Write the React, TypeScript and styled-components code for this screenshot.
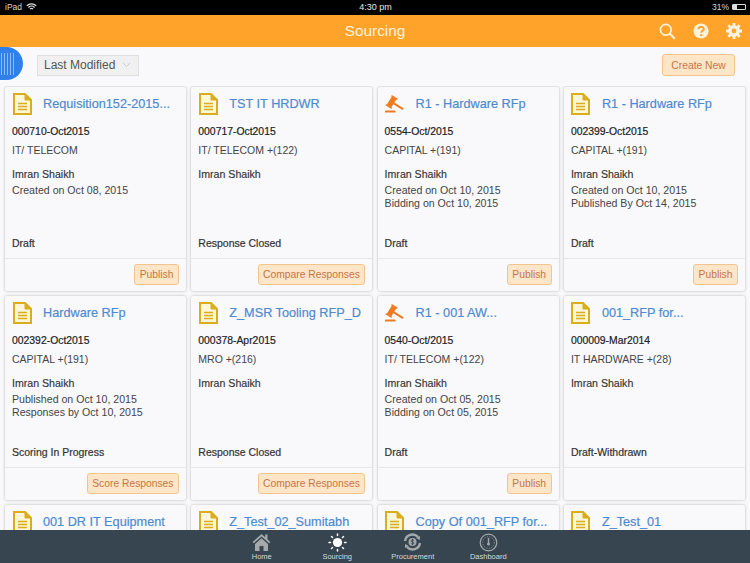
import React from "react";
import styled, { createGlobalStyle } from "styled-components";

const Global = createGlobalStyle`
  html, body { margin: 0; padding: 0; background: #f9f9fb; }
  body { font-family: "Liberation Sans", Arial, sans-serif; }
  * { box-sizing: border-box; }
`;
const Page = styled.div`
  width: 750px; height: 563px; display: flex; flex-direction: column; overflow: hidden; background: #f9f9fb;
`;
const StatusBar = styled.div`
  height: 15px; flex: none; background: #000; color: #d8d8d8; font-size: 8.5px;
  display: grid; grid-template-columns: 1fr auto 1fr; align-items: center; padding: 0 4px 1px 5px;
`;
const StatusLeft = styled.div`display: flex; align-items: center; gap: 4px;`;
const StatusRight = styled.div`display: flex; align-items: center; justify-content: flex-end; gap: 3px;`;
const Time = styled.div`font-size: 9px; color: #e8e8e8;`;
const Battery = styled.div`
  width: 14px; height: 6px; border: 1px solid #ddd; border-radius: 1px; background: linear-gradient(90deg, #ddd 35%, transparent 35%);
`;
const Header = styled.header`
  height: 32px; flex: none; background: #ffa32a; position: relative; display: flex; align-items: center; justify-content: center;
`;
const HeaderTitle = styled.h1`margin: 0; font-size: 15.4px; font-weight: 400; color: #fff2dd;`;
const HeaderIcons = styled.div`
  position: absolute; right: 8px; top: 0; bottom: 0; display: flex; align-items: center; gap: 17px;
`;
const Toolbar = styled.div`
  height: 39px; flex: none; display: flex; align-items: center; justify-content: space-between; padding: 0 15px 0 0;
`;
const ToolbarLeft = styled.div`display: flex; align-items: center; gap: 14px;`;
const SideTab = styled.div`
  width: 23px; height: 33px; margin-top: -6px; border-radius: 0 17px 17px 0; background: #2f80ea;
  display: flex; align-items: center; justify-content: flex-start; gap: 2px; padding-left: 1px;
`;
const Stripe = styled.span`display: block; width: 1px; height: 22px; background: #8fbdf5;`;
const Sort = styled.div`
  width: 102px; height: 21px; margin-top: -3px; background: #f0f0f0; border: 1px solid #dfdfdf; color: #555; font-size: 12px;
  display: flex; align-items: center; justify-content: space-between; padding: 0 7px 0 6px;
`;
const ActionButton = styled.button`
  font: inherit; font-size: 10.3px; height: 21px; padding: 0 4.5px; white-space: nowrap; color: #c67644; background: #fde5c8;
  border: 1px solid #f3c48e; border-radius: 3px; display: flex; align-items: center;
`;
const CreateButton = styled(ActionButton)`width: 73px; height: 22px; justify-content: center; margin-top: -3px;`;
const Grid = styled.main`
  flex: 1; min-height: 0; overflow: hidden; padding: 1px 5px 0; display: grid;
  grid-template-columns: repeat(4, 181px); grid-auto-rows: 203.5px; column-gap: 5.3px; row-gap: 5.6px;
`;
const Card = styled.article`
  background: #f9f9fc; border-radius: 2px; box-shadow: 0 0 3px rgba(0,0,0,.28);
  display: flex; flex-direction: column; height: 203.5px; padding: 0;
`;
const CardBody = styled.div`flex: 1; padding: 0 7px; display: flex; flex-direction: column; min-height: 0;`;
const TitleRow = styled.div`height: 33px; display: flex; align-items: center; gap: 11px;`;
const IconBox = styled.div`width: 20px; flex: none; display: flex; justify-content: center;`;
const Title = styled.h2`
  margin: 0; font-size: 12.7px; font-weight: 400; color: #4f8ad0; white-space: nowrap; -webkit-text-stroke: .2px #4f8ad0;
`;
const Code = styled.div`margin-top: 5px; font-size: 10.4px; line-height: 13px; font-weight: 400; color: #222; -webkit-text-stroke: .2px #222;`;
const Category = styled.div`margin-top: 6px; font-size: 10.5px; line-height: 13px; color: #444;`;
const Person = styled.div`margin-top: 11px; margin-bottom: 3px; font-size: 10.6px; line-height: 13px; color: #333; -webkit-text-stroke: .15px #333;`;
const Detail = styled.div`font-size: 10.6px; line-height: 12.5px; color: #444;`;
const Status = styled.div`margin-top: auto; margin-bottom: 8px; font-size: 10.5px; line-height: 13px; color: #333; -webkit-text-stroke: .2px #333;`;
const CardFooter = styled.div`
  height: 33px; flex: none; border-top: 1px solid #e6e6e6; padding: 0 7px 0 7px; display: flex; align-items: center; justify-content: flex-end;
`;
const TabBar = styled.nav`
  height: 33px; flex: none; background: #36454f; position: relative; z-index: 1;
  display: flex; justify-content: flex-start; padding-left: 224px;
`;
const Tab = styled.div`
  width: 75.5px; display: flex; flex-direction: column; align-items: center; justify-content: flex-start; padding-top: 2px; color: #d5dadc; font-size: 7.5px; line-height: 9px;
`;
const TabIcon = styled.div`height: 20px; display: flex; align-items: center; justify-content: center;`;

const DocIcon = () => (
  <svg width="19" height="22" viewBox="0 0 19 22">
    <path d="M1 1h11l6 6v14H1z" fill="#fdf6d8" stroke="#d9ad1c" strokeWidth="2" />
    <path d="M12 1v6h6" fill="#d9ad1c" stroke="#d9ad1c" strokeWidth="1" />
    <path d="M5 10.5h9M5 13.5h9M5 16.5h9" stroke="#d9ad1c" strokeWidth="1.6" />
  </svg>
);
const GavelIcon = () => (
  <svg width="23" height="20" viewBox="0 0 23 20">
    <g fill="#f07a1d" transform="rotate(32 8 8)">
      <rect x="10" y="6.800" width="13" height="2.400" />
      <rect x="4.500" y="2.500" width="6" height="11" />
      <rect x="3.500" y="1" width="8" height="1.800" rx=".4" />
      <rect x="3.500" y="13.200" width="8" height="1.800" rx=".4" />
    </g>
    <path d="M1.200 17.600h9.600a1.500 1.500 0 0 1 1.200 2.100H0a1.500 1.500 0 0 1 1.200-2.100z" fill="#f07a1d" />
  </svg>
);
const Wifi = () => (
  <svg width="11" height="8" viewBox="0 0 11 8" fill="none" stroke="#ddd" strokeWidth="1.2">
    <path d="M.8 2.800a6.800 6.800 0 0 1 9.400 0M2.400 4.500a4.400 4.400 0 0 1 6.200 0M4 6a2.200 2.200 0 0 1 3 0" />
  </svg>
);
const Search = () => (
  <svg width="17" height="17" viewBox="0 0 17 17" fill="none" stroke="#fff3df" strokeWidth="1.700">
    <circle cx="6.800" cy="6.800" r="5.400" /><path d="M10.800 10.800l5 5" strokeWidth="2.200" />
  </svg>
);
const Help = () => (
  <svg width="16" height="16" viewBox="0 0 16 16">
    <circle cx="8" cy="8" r="7.600" fill="#fff3df" />
    <path d="M5.400 6.200c0-3.200 5.400-3.200 5.400-.2 0 2-2.600 1.800-2.600 3.800" fill="none" stroke="#ffa32a" strokeWidth="1.900" />
    <circle cx="8.200" cy="12.100" r="1.200" fill="#ffa32a" />
  </svg>
);
const Gear = () => (
  <svg width="16" height="16" viewBox="0 0 16 16">
    <g fill="#fff3df">
      <path d="M6.600 0h2.800v16H6.600zM0 6.600h16v2.800H0z" />
      <path d="M6.600 0h2.800v16H6.600z" transform="rotate(45 8 8)" />
      <path d="M6.600 0h2.800v16H6.600z" transform="rotate(-45 8 8)" />
      <circle cx="8" cy="8" r="5.800" />
    </g>
    <circle cx="8" cy="8" r="2.400" fill="#ffa32a" />
  </svg>
);
const Chevron = () => (
  <svg width="9" height="6" viewBox="0 0 9 6" fill="none" stroke="#c9c9c9" strokeWidth="1">
    <path d="M1 1l3.500 3.500L8 1" />
  </svg>
);
const HomeIcon = () => (
  <svg width="19" height="18" viewBox="0 0 19 18">
    <path d="M9.500 1L.6 9l1.200 1.300L9.500 3.500l7.700 6.800L18.400 9l-2.900-2.600V1.500h-2.300v2.800z" fill="#a5a9ab" />
    <path d="M3 11l6.500-5.800L16 11v7h-4.500v-5h-4v5H3z" fill="#a5a9ab" />
  </svg>
);
const SunIcon = () => (
  <svg width="19" height="19" viewBox="0 0 19 19">
    <circle cx="9.500" cy="9.500" r="4.600" fill="#fff" />
    <g stroke="#fff" strokeWidth="1.500" strokeLinecap="round">
      <path d="M9.500 1v1.500M9.500 16.500V18M1 9.500h1.500M16.500 9.500H18M3.500 3.500l1 1M14.500 14.500l1 1M15.500 3.500l-1 1M4.500 14.500l-1 1" />
    </g>
  </svg>
);
const ProcIcon = () => (
  <svg width="19" height="18" viewBox="0 0 19 18" fill="none" stroke="#a5a9ab">
    <path d="M2 8a7.500 7.500 0 0 1 13-4" strokeWidth="2.400" />
    <path d="M17 10a7.500 7.500 0 0 1-13 4" strokeWidth="2.400" />
    <path d="M13 5l4-2v4zM6 13l-4 2v-4z" fill="#a5a9ab" stroke="none" />
    <circle cx="9.500" cy="9" r="4" fill="#a5a9ab" stroke="none" />
    <path d="M11 7.500c-1-1-3-.8-3 .4 0 1.400 3 .7 3 2.200 0 1.200-2 1.300-3 .4M9.500 5.800v6.400" stroke="#36454f" strokeWidth=".8" />
  </svg>
);
const DashIcon = () => (
  <svg width="19" height="19" viewBox="0 0 19 19" fill="none" stroke="#a5a9ab">
    <circle cx="9.500" cy="9.500" r="8.300" strokeWidth="1.200" />
    <circle cx="9.500" cy="9.500" r="5.800" strokeWidth=".8" strokeDasharray="1 1.500" />
    <path d="M9.500 10V5" strokeWidth="1.400" />
    <circle cx="9.500" cy="11" r="1.500" fill="#a5a9ab" stroke="none" />
  </svg>
);

type CardData = {
  icon: "doc" | "gavel"; title: string; code?: string; category?: string; person?: string;
  details?: string[]; status?: string; action?: string;
};
const cards: CardData[] = [
  { icon: "doc", title: "Requisition152-2015...", code: "000710-Oct2015", category: "IT/ TELECOM", person: "Imran Shaikh", details: ["Created on Oct 08, 2015"], status: "Draft", action: "Publish" },
  { icon: "doc", title: "TST IT HRDWR", code: "000717-Oct2015", category: "IT/ TELECOM +(122)", person: "Imran Shaikh", status: "Response Closed", action: "Compare Responses" },
  { icon: "gavel", title: "R1 - Hardware RFp", code: "0554-Oct/2015", category: "CAPITAL +(191)", person: "Imran Shaikh", details: ["Created on Oct 10, 2015", "Bidding on Oct 10, 2015"], status: "Draft", action: "Publish" },
  { icon: "doc", title: "R1 - Hardware RFp", code: "002399-Oct2015", category: "CAPITAL +(191)", person: "Imran Shaikh", details: ["Created on Oct 10, 2015", "Published By  Oct 14, 2015"], status: "Draft", action: "Publish" },
  { icon: "doc", title: "Hardware RFp", code: "002392-Oct2015", category: "CAPITAL +(191)", person: "Imran Shaikh", details: ["Published on Oct 10, 2015", "Responses by Oct 10, 2015"], status: "Scoring In Progress", action: "Score Responses" },
  { icon: "doc", title: "Z_MSR Tooling RFP_D", code: "000378-Apr2015", category: "MRO +(216)", person: "Imran Shaikh", status: "Response Closed", action: "Compare Responses" },
  { icon: "gavel", title: "R1 - 001 AW...", code: "0540-Oct/2015", category: "IT/ TELECOM +(122)", person: "Imran Shaikh", details: ["Created on Oct 05, 2015", "Bidding on Oct 05, 2015"], status: "Draft", action: "Publish" },
  { icon: "doc", title: "001_RFP for...", code: "000009-Mar2014", category: "IT HARDWARE +(28)", person: "Imran Shaikh", status: "Draft-Withdrawn" },
  { icon: "doc", title: "001 DR IT Equipment" },
  { icon: "doc", title: "Z_Test_02_Sumitabh" },
  { icon: "doc", title: "Copy Of 001_RFP for..." },
  { icon: "doc", title: "Z_Test_01" },
];

export default function App() {
  return (
    <Page>
      <Global />
      <StatusBar>
        <StatusLeft>iPad <Wifi /></StatusLeft>
        <Time>4:30 pm</Time>
        <StatusRight>31% <Battery /></StatusRight>
      </StatusBar>
      <Header>
        <HeaderTitle>Sourcing</HeaderTitle>
        <HeaderIcons><Search /><Help /><Gear /></HeaderIcons>
      </Header>
      <Toolbar>
        <ToolbarLeft>
          <SideTab>{[0, 1, 2, 3, 4].map((i) => <Stripe key={i} />)}</SideTab>
          <Sort>Last Modified <Chevron /></Sort>
        </ToolbarLeft>
        <CreateButton>Create New</CreateButton>
      </Toolbar>
      <Grid>
        {cards.map((c, i) => (
          <Card key={i}>
            <CardBody>
              <TitleRow>
                <IconBox>{c.icon === "doc" ? <DocIcon /> : <GavelIcon />}</IconBox>
                <Title>{c.title}</Title>
              </TitleRow>
              {c.code && <Code>{c.code}</Code>}
              {c.category && <Category>{c.category}</Category>}
              {c.person && <Person>{c.person}</Person>}
              {c.details?.map((d) => <Detail key={d}>{d}</Detail>)}
              {c.status && <Status>{c.status}</Status>}
            </CardBody>
            <CardFooter>{c.action && <ActionButton>{c.action}</ActionButton>}</CardFooter>
          </Card>
        ))}
      </Grid>
      <TabBar>
        <Tab><TabIcon><HomeIcon /></TabIcon>Home</Tab>
        <Tab><TabIcon><SunIcon /></TabIcon>Sourcing</Tab>
        <Tab><TabIcon><ProcIcon /></TabIcon>Procurement</Tab>
        <Tab><TabIcon><DashIcon /></TabIcon>Dashboard</Tab>
      </TabBar>
    </Page>
  );
}
